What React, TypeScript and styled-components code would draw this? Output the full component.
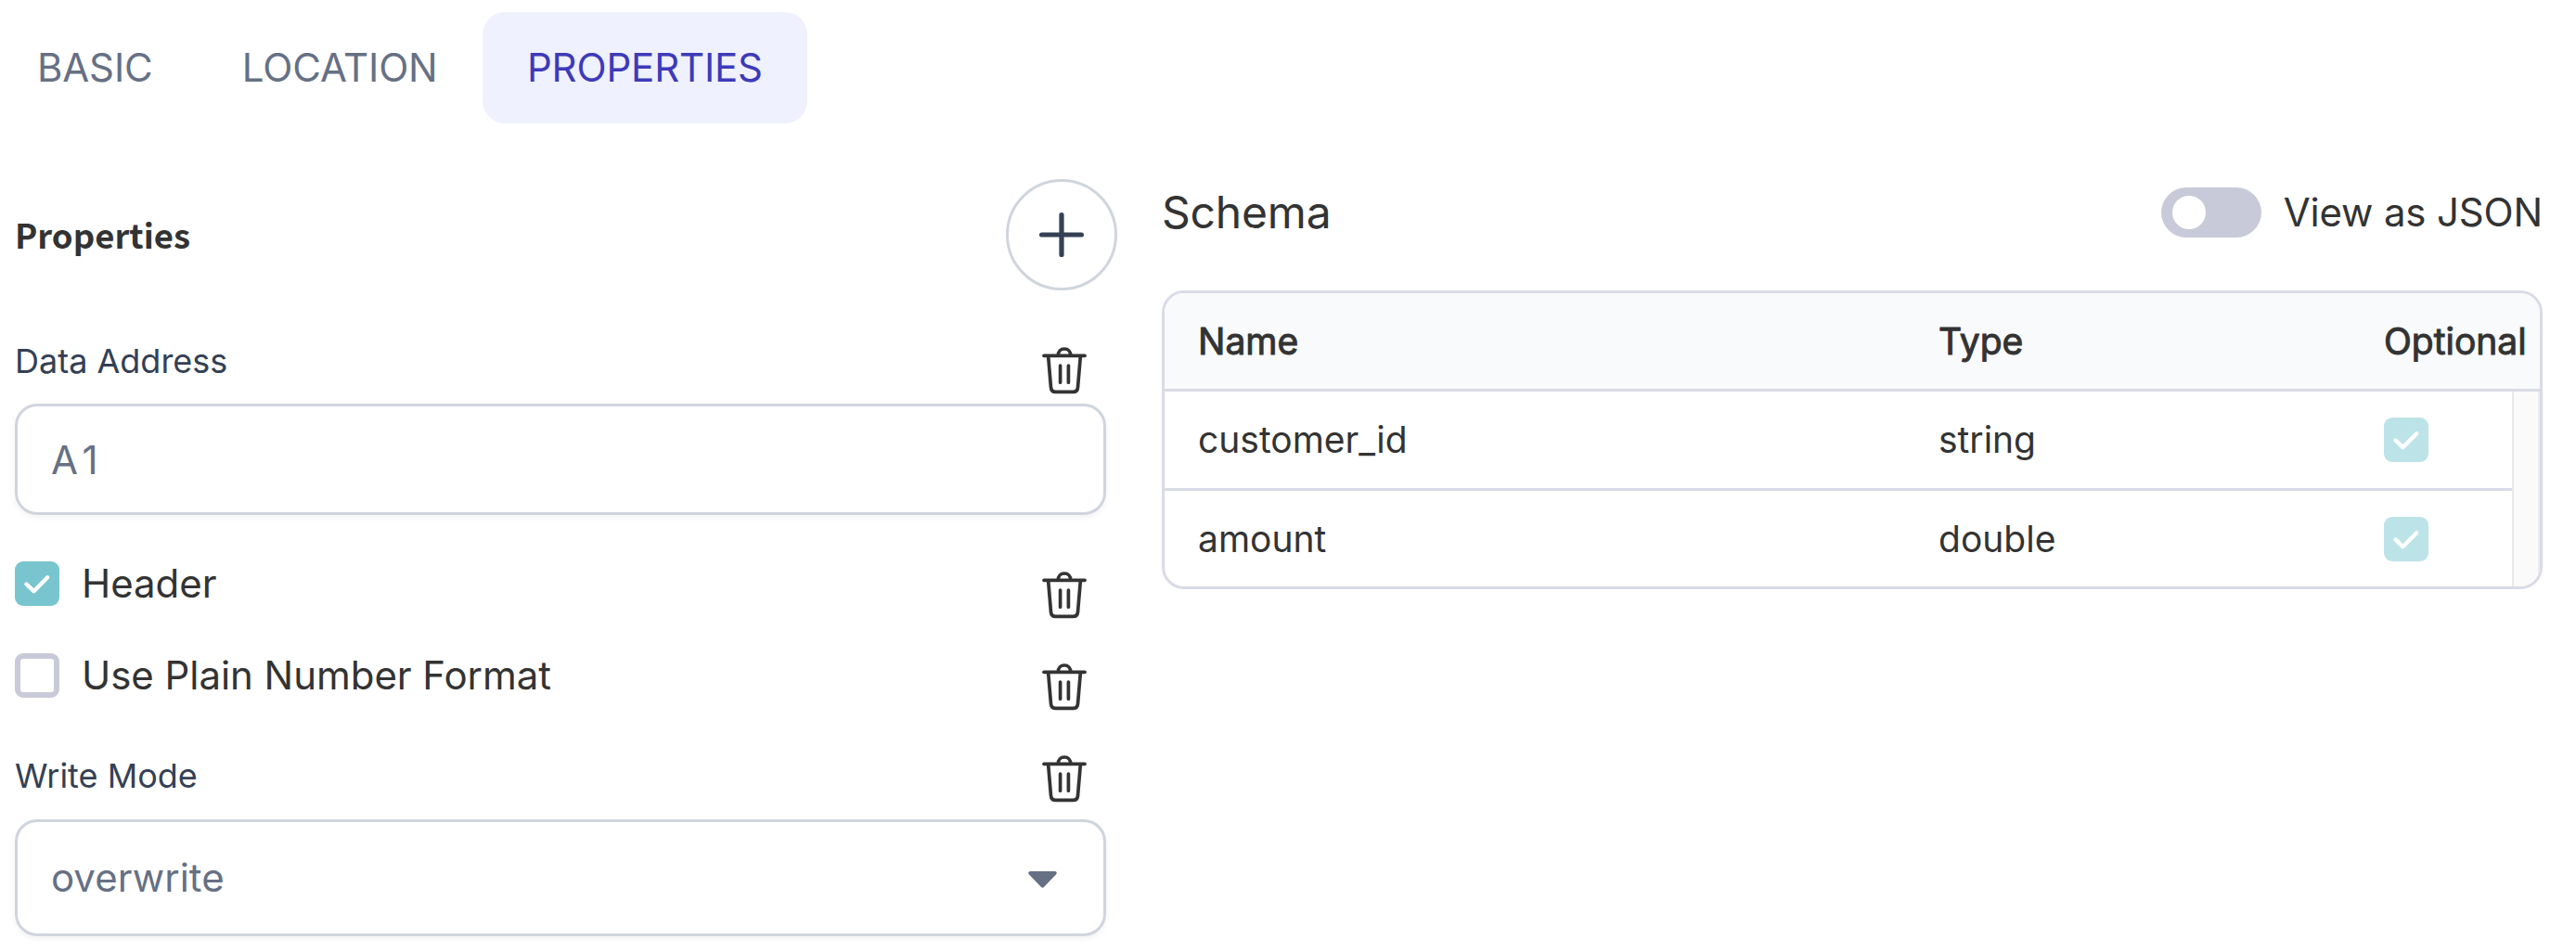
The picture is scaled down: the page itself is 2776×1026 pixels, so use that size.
import React, { useState } from 'react';
import styled, { createGlobalStyle, css } from 'styled-components';

const GlobalStyle = createGlobalStyle`
  *, *::before, *::after { box-sizing: border-box; }
  body { margin: 0; background: #fff; color: #333; font-family: Inter, "Open Sans", sans-serif; font-size: 42px; line-height: 50px; }
  button { font: inherit; color: inherit; background: none; border: 0; padding: 0; cursor: pointer; }
`;

const Page = styled.div`
  width: 2776px;
  height: 1026px;
  padding-top: 13px;
  overflow: hidden;
`;

const TabList = styled.nav`
  display: flex;
  gap: 0.35px;
  height: 120px;
  margin-left: -8px;
`;

const Tab = styled.button<{ $active: boolean }>`
  height: 120px;
  padding: 0 48px;
  border-radius: 24px;
  letter-spacing: -0.17px;
  color: ${p => (p.$active ? '#3e3ab9' : '#667085')};
  background: ${p => (p.$active ? '#eff1fe' : 'transparent')};
`;

const Columns = styled.main`
  display: grid;
  grid-template-columns: 1188px 1488px;
  gap: 48px;
  padding: 60px 0 0 16px;
`;

const PaneHeader = styled.header`
  display: flex;
  align-items: center;
  justify-content: space-between;
  height: 120px;
`;

const PaneTitle = styled.h2`
  margin: 0;
  font: 700 36.5px/54px "Noto Sans CJK SC", sans-serif;
`;

const AddButton = styled.button`
  display: grid;
  place-items: center;
  width: 120px;
  height: 120px;
  border: 3px solid #d0d5dd;
  border-radius: 50%;
  color: #344054;
`;

const Form = styled.div`
  width: 1176px;
  padding-top: 49px;
`;

const FieldHead = styled.div<{ $height: number; $drop: number }>`
  display: flex;
  align-items: flex-start;
  justify-content: space-between;
  height: ${p => p.$height}px;
  padding-right: 21px;
  svg { margin-top: ${p => p.$drop}px; }
`;

const FieldLabel = styled.label`
  font-size: 36px;
  line-height: 54px;
  color: #344054;
`;

const control = css`
  width: 100%;
  border: 3px solid #d0d5dd;
  border-radius: 24px;
  padding: 0 36px;
  background: #fff;
  color: #667085;
  box-shadow: 0 3px 6px rgba(16, 24, 40, 0.05);
`;

const TextInput = styled.input`
  ${control}
  display: block;
  height: 120px;
  font: 42px Inter, sans-serif;
  letter-spacing: 6px;
  outline: none;
`;

const SelectBox = styled.button`
  ${control}
  display: flex;
  align-items: center;
  justify-content: space-between;
  height: 126px;
  padding-right: 50px;
  svg { margin-top: 4px; }
`;

const CheckRows = styled.div`
  display: flex;
  flex-direction: column;
  gap: 33px;
  padding: 44px 21px 45px 0;
`;

const CheckRow = styled.div`
  display: flex;
  align-items: flex-start;
  justify-content: space-between;
  height: 66px;
`;

const CheckLabel = styled.label`
  display: flex;
  align-items: center;
  gap: 24px;
  height: 60px;
  letter-spacing: -0.05px;
`;

const TrashSlot = styled.button`
  display: block;
  margin-top: 17px;
  svg { display: block; }
`;

const Box = styled.span<{ $checked: boolean; $faded?: boolean }>`
  display: grid;
  place-items: center;
  flex: none;
  width: 48px;
  height: 48px;
  border-radius: 9px;
  border: ${p => (p.$checked ? '0' : '6px solid #c9cad9')};
  background: ${p => (p.$faded ? '#bce3e8' : p.$checked ? '#78c5d0' : '#fff')};
`;

const SchemaHeader = styled.header`
  display: flex;
  align-items: center;
  justify-content: space-between;
  height: 72px;
`;

const SchemaTitle = styled.h2`
  margin: 0;
  font-size: 48px;
  font-weight: 400;
  line-height: 58px;
  letter-spacing: -0.2px;
`;

const ToggleLabel = styled.label`
  display: flex;
  align-items: center;
  gap: 24px;
  letter-spacing: -0.17px;
`;

const Toggle = styled.button<{ $on: boolean }>`
  display: flex;
  align-items: center;
  justify-content: ${p => (p.$on ? 'flex-end' : 'flex-start')};
  width: 108px;
  height: 54px;
  padding: 0 12px;
  border-radius: 27px;
  background: #c9cad9;
`;

const Knob = styled.span`
  width: 36px;
  height: 36px;
  border-radius: 50%;
  background: #fff;
`;

const Table = styled.div`
  height: 322px;
  margin-top: 48px;
  border: 3px solid #d9dbe6;
  border-radius: 24px;
  overflow: hidden;
  font-size: 39px;
  line-height: 46px;
`;

const TableRow = styled.div<{ $height: number; $last?: boolean }>`
  display: grid;
  grid-template-columns: 798px 480px 1fr;
  align-items: center;
  height: ${p => p.$height}px;
  border-bottom: ${p => (p.$last ? '0' : '3px solid #d9dbe6')};
`;

const HeadRow = styled(TableRow)`
  background: #f9fafc;
  -webkit-text-stroke: 1px #333;
`;

const Cell = styled.div`
  padding-left: 36px;
  white-space: nowrap;
`;

const TableBody = styled.div`
  display: grid;
  grid-template-columns: 1fr 30px;
`;

const ScrollTrack = styled.div`
  background: #fafafa;
  border-left: 2px solid #e8e8e8;
  border-right: 2px solid #ededed;
`;

const PlusIcon = () => (
  <svg width="54" height="54" viewBox="0 0 54 54" fill="none" stroke="currentColor" strokeWidth="5.2" strokeLinecap="round">
    <path d="M27 5.6V48.4M5.6 27H48.4" />
  </svg>
);

const TrashIcon = () => (
  <svg width="48" height="51" viewBox="0 0 48 51" fill="none" stroke="#333" strokeWidth="3.7" strokeLinecap="round" strokeLinejoin="round">
    <path d="M2 9.3H46" />
    <path d="M17.3 9C17.3 4.8 20 2 24 2S30.7 4.8 30.7 9" />
    <path d="M6.7 10.5L9.5 43.5C9.8 46.7 11.8 48.4 14.7 48.4H33.3C36.2 48.4 38.2 46.7 38.5 43.5L41.3 10.5" />
    <path d="M19.6 20V38.2M28.4 20V38.2" />
  </svg>
);

const CheckIcon = () => (
  <svg width="48" height="48" viewBox="0 0 48 48" fill="none" stroke="#fff" strokeWidth="4.4" strokeLinecap="round" strokeLinejoin="round">
    <path d="M12.5 24.5L20.4 32.2L35.2 17.3" />
  </svg>
);

const CaretIcon = () => (
  <svg width="31" height="18" viewBox="0 0 31 18" fill="#667085">
    <path d="M2.2 0H28.8C30.8 0 31.3 2.2 30 3.6L17 17C16 18 15 18 14 17L1 3.6C-.3 2.2 .2 0 2.2 0Z" />
  </svg>
);

const tabs = ['BASIC', 'LOCATION', 'PROPERTIES'];
const schema = [
  { name: 'customer_id', type: 'string' },
  { name: 'amount', type: 'double' },
];

export default function App() {
  const [tab, setTab] = useState('PROPERTIES');
  const [json, setJson] = useState(false);
  const [checks, setChecks] = useState([true, false]);
  const flip = (i: number) => setChecks(c => c.map((v, n) => (n === i ? !v : v)));

  return (
    <Page>
      <GlobalStyle />
      <TabList>
        {tabs.map(t => (
          <Tab key={t} $active={t === tab} onClick={() => setTab(t)}>{t}</Tab>
        ))}
      </TabList>
      <Columns>
        <section>
          <PaneHeader>
            <PaneTitle>Properties</PaneTitle>
            <AddButton><PlusIcon /></AddButton>
          </PaneHeader>
          <Form>
            <FieldHead $height={73} $drop={12}>
              <FieldLabel>Data Address</FieldLabel>
              <TrashIcon />
            </FieldHead>
            <TextInput defaultValue="A1" />
            <CheckRows>
              {['Header', 'Use Plain Number Format'].map((label, i) => (
                <CheckRow key={label}>
                  <CheckLabel onClick={() => flip(i)}>
                    <Box $checked={checks[i]}>{checks[i] && <CheckIcon />}</Box>
                    {label}
                  </CheckLabel>
                  <TrashSlot><TrashIcon /></TrashSlot>
                </CheckRow>
              ))}
            </CheckRows>
            <FieldHead $height={74} $drop={5}>
              <FieldLabel>Write Mode</FieldLabel>
              <TrashIcon />
            </FieldHead>
            <SelectBox>overwrite<CaretIcon /></SelectBox>
          </Form>
        </section>
        <section>
          <SchemaHeader>
            <SchemaTitle>Schema</SchemaTitle>
            <ToggleLabel>
              <Toggle $on={json} onClick={() => setJson(!json)}><Knob /></Toggle>
              View as JSON
            </ToggleLabel>
          </SchemaHeader>
          <Table>
            <HeadRow $height={106}>
              <Cell>Name</Cell>
              <Cell>Type</Cell>
              <Cell>Optional</Cell>
            </HeadRow>
            <TableBody>
              <div>
                {schema.map((row, i) => (
                  <TableRow key={row.name} $height={i ? 103 : 107} $last={i === schema.length - 1}>
                    <Cell>{row.name}</Cell>
                    <Cell>{row.type}</Cell>
                    <Cell><Box $checked $faded><CheckIcon /></Box></Cell>
                  </TableRow>
                ))}
              </div>
              <ScrollTrack />
            </TableBody>
          </Table>
        </section>
      </Columns>
    </Page>
  );
}
